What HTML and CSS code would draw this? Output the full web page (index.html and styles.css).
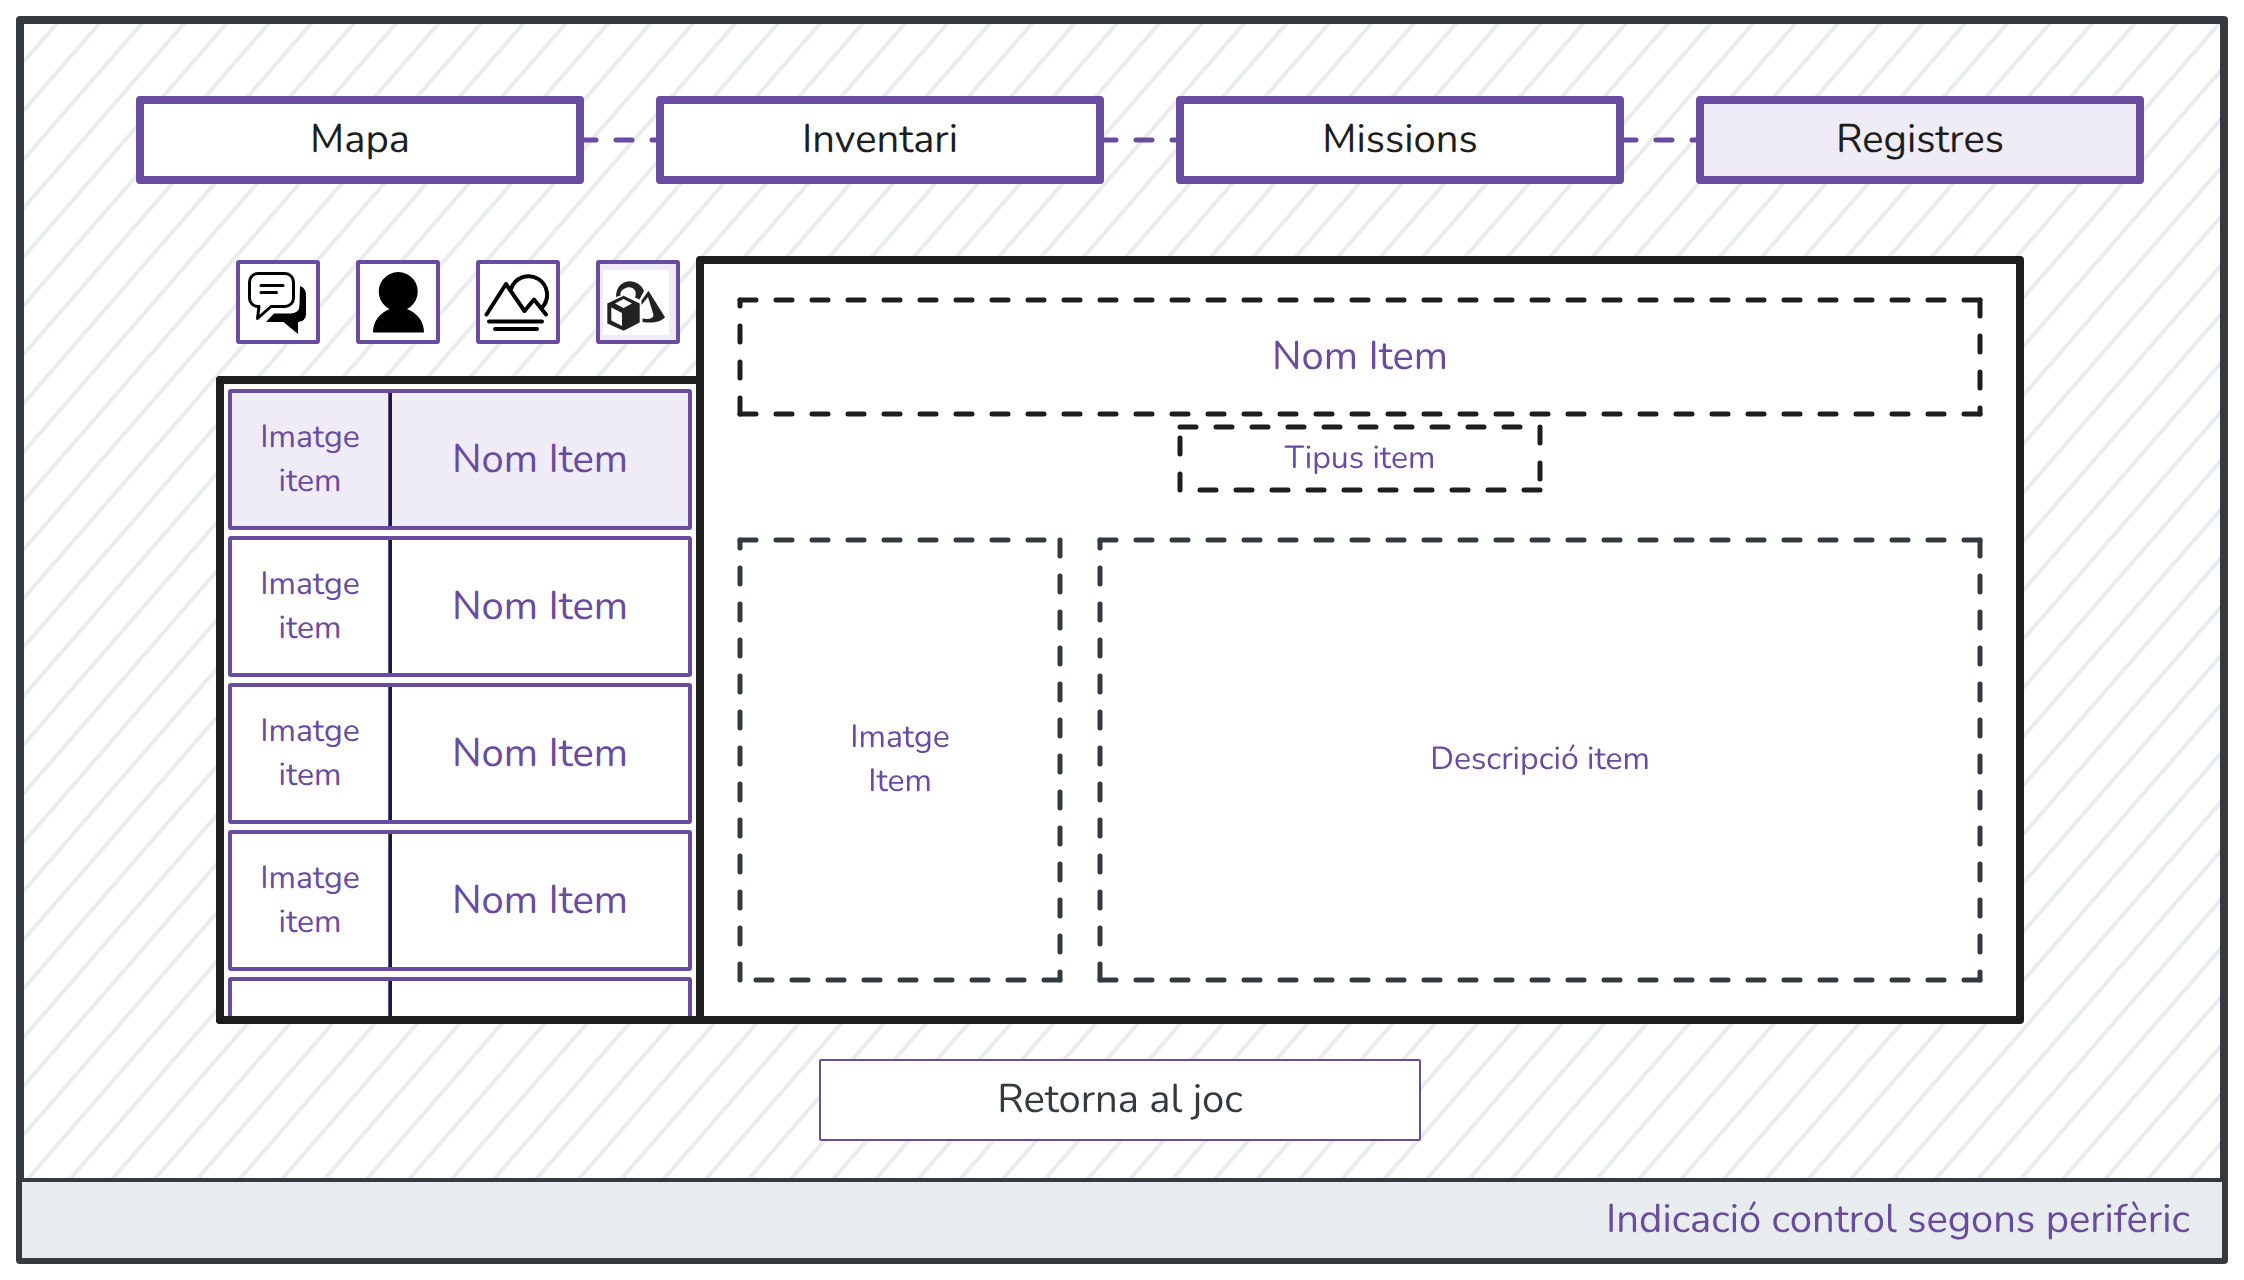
FILE: index.html
```html
<!DOCTYPE html>
<html lang="ca">
<head>
<meta charset="utf-8">
<meta name="viewport" content="width=device-width, initial-scale=1">
<title>Registres</title>
<link rel="stylesheet" href="styles.css">
</head>
<body>
<div class="frame">
  <nav class="menu" aria-label="Menú">
    <button class="menu-item" type="button">Mapa</button>
    <svg class="connector" aria-hidden="true"><line x1="-4" y1="4" x2="76" y2="4"/></svg>
    <button class="menu-item" type="button">Inventari</button>
    <svg class="connector" aria-hidden="true"><line x1="-4" y1="4" x2="76" y2="4"/></svg>
    <button class="menu-item" type="button">Missions</button>
    <svg class="connector" aria-hidden="true"><line x1="-4" y1="4" x2="76" y2="4"/></svg>
    <button class="menu-item selected" type="button" aria-current="page">Registres</button>
  </nav>

  <main class="workspace">
    <section class="browser">
      <div class="filters">
        <button class="filter" type="button" aria-label="Diàlegs">
          <svg viewBox="0 0 84 84" aria-hidden="true">
            <path d="M22 13.500H49a8.500 8.500 0 0 1 8.500 8.500V38a8.500 8.500 0 0 1-8.500 8.500H35L21.500 58.500L23 46.500H22a8.500 8.500 0 0 1-8.500-8.500V22a8.500 8.500 0 0 1 8.500-8.500Z" fill="none" stroke="#000" stroke-width="3" stroke-linejoin="round"/>
            <path d="M25 25.500H47M25 32.500H40.500" stroke="#000" stroke-width="3" stroke-linecap="round"/>
            <path d="M64 26Q70 28 70 35V54Q70 61 62 62V74L47.500 62H30L38 53.500H55Q63.500 53 63.500 45Z"/>
          </svg>
        </button>
        <button class="filter" type="button" aria-label="Personatges">
          <svg viewBox="0 0 84 84" aria-hidden="true">
            <path d="M33.500 49A19.500 19.500 0 1 1 51 49C61 53 68 61 68 72.500H17C17 61 24 53 33.500 49Z"/>
          </svg>
        </button>
        <button class="filter" type="button" aria-label="Llocs">
          <svg viewBox="0 0 84 84" fill="none" stroke="#000" stroke-width="4" stroke-linecap="round" stroke-linejoin="round" aria-hidden="true">
            <path d="M10.500 54.500L30 24L48.500 51L58 39.500L70 54.500"/>
            <path d="M35 29A18.500 18.500 0 1 1 66 47.500M13 61.500H66M19 69H61"/>
          </svg>
        </button>
        <button class="filter active" type="button" aria-label="Objectes" aria-pressed="true">
          <svg viewBox="0 0 84 84" aria-hidden="true">
            <path d="M7 10H73V75H7Z" fill="#fff"/>
            <path d="M20 37C20 17 43 17 48 31L43.500 39.500L39 37.500C42 30 36 26 31 27.500C26 29 24 32 24.500 35.500Z" fill="#222"/>
            <path d="M27.700 35.700L43.700 43.500V62.500L27.700 70.700L11.300 63.500V43.500Z" fill="#222"/>
            <path d="M27.500 39L36 43.500L27.500 48L19 43.500ZM15.300 47.500L26 53V66L15.300 60.500Z" fill="#fff"/>
            <path d="M52.500 30.700L69 57.300C65 62 57 63.500 46.500 62V58.500C53 59.500 57 59 57.500 55L52 37L45.500 45V40.500Z" fill="#222"/>
          </svg>
        </button>
      </div>

      <ul class="items">
        <li><button class="item selected" type="button"><span class="item-image">Imatge<br>item</span><span class="item-name">Nom Item</span></button></li>
        <li><button class="item" type="button"><span class="item-image">Imatge<br>item</span><span class="item-name">Nom Item</span></button></li>
        <li><button class="item" type="button"><span class="item-image">Imatge<br>item</span><span class="item-name">Nom Item</span></button></li>
        <li><button class="item" type="button"><span class="item-image">Imatge<br>item</span><span class="item-name">Nom Item</span></button></li>
        <li><button class="item" type="button" aria-label="Item"><span class="item-image"></span><span class="item-name"></span></button></li>
      </ul>
    </section>

    <article class="detail">
      <h1 class="slot slot-title">
        <svg class="dashes" aria-hidden="true"><line x2="100%"/><line x1="100%" x2="100%" y2="100%"/><line x1="100%" y1="100%" y2="100%"/><line y1="100%"/></svg>
        Nom Item
      </h1>
      <p class="slot slot-type">
        <svg class="dashes" aria-hidden="true"><line x2="100%"/><line x1="100%" x2="100%" y2="100%"/><line x1="100%" y1="100%" y2="100%"/><line y1="100%"/></svg>
        Tipus item
      </p>
      <div class="detail-body">
        <div class="slot slot-soft">
          <svg class="dashes" aria-hidden="true"><line x2="100%"/><line x1="100%" x2="100%" y2="100%"/><line x1="100%" y1="100%" y2="100%"/><line y1="100%"/></svg>
          <span>Imatge<br>Item</span>
        </div>
        <div class="slot slot-soft">
          <svg class="dashes" aria-hidden="true"><line x2="100%"/><line x1="100%" x2="100%" y2="100%"/><line x1="100%" y1="100%" y2="100%"/><line y1="100%"/></svg>
          <span>Descripció item</span>
        </div>
      </div>
    </article>
  </main>

  <button class="return" type="button">Retorna al joc</button>

  <footer class="hint">Indicació control segons perifèric</footer>
</div>
</body>
</html>
```
FILE: styles.css
```css
:root {
  --purple: #694b9f;
  --lavender: #f0ecf7;
  --ink: #1e1e1e;
  --slate: #343a40;
  --mist: #e9ecef;
}

* { box-sizing: border-box; }

body {
  margin: 0;
  padding: 16px;
  background: #fff;
  color: var(--ink);
  font: 32px/44px Nunito, Lato, sans-serif;
  text-rendering: geometricPrecision;
}

button {
  font: inherit;
  color: inherit;
  text-rendering: inherit;
  cursor: pointer;
}

.frame {
  display: flex;
  flex-direction: column;
  height: calc(100vh - 32px);
  min-height: 960px;
  border: 8px solid var(--slate);
  border-radius: 4px;
  background: repeating-linear-gradient(131deg,
    #fff 0 22px, var(--mist) 23px 26px, #fff 27px 32px);
}

/* Top menu */
.menu {
  display: flex;
  align-items: center;
  padding: 72px 76px 0 112px;
}

.menu-item {
  flex: 1;
  height: 88px;
  padding: 0;
  border: 8px solid var(--purple);
  border-radius: 4px;
  background: #fff;
  font-size: 40px;
}

.menu-item.selected { background: var(--lavender); }

.connector {
  width: 72px;
  height: 8px;
  overflow: visible;
}

.connector line {
  stroke: var(--purple);
  stroke-width: 5px;
  stroke-linecap: round;
  stroke-dasharray: 16 20;
}

/* Item browser and detail */
.workspace {
  flex: 1;
  display: grid;
  grid-template-columns: 480px 1fr;
  grid-template-rows: minmax(0, 1fr);
  min-height: 0;
  margin: 72px 196px 0 192px;
}

.browser {
  display: flex;
  flex-direction: column;
  min-height: 0;
}

.filters {
  display: flex;
  gap: 36px;
  padding: 4px 20px 32px;
}

.filter {
  width: 84px;
  height: 84px;
  padding: 0;
  border: 4px solid var(--purple);
  border-radius: 3px;
  background: #fff;
}

.filter svg {
  display: block;
  width: 84px;
  height: 84px;
  margin: -4px;
}

.filter.active { background: var(--lavender); }

.items {
  flex: 1;
  display: flex;
  flex-direction: column;
  gap: 6px;
  min-height: 0;
  margin: 0;
  padding: 5px 4px 0;
  overflow-y: auto;
  scrollbar-width: none;
  list-style: none;
  border: 8px solid var(--ink);
  border-right: 0;
  border-radius: 4px 0 0 4px;
  background: #fff;
}

.item {
  display: grid;
  grid-template-columns: 157px 1fr;
  width: 100%;
  height: 141px;
  padding: 0;
  border: 4px solid var(--purple);
  border-radius: 3px;
  background: #fff;
  color: var(--purple);
}

.items li { display: flex; }

.item.selected { background: var(--lavender); }

.item-image,
.item-name {
  display: flex;
  align-items: center;
  justify-content: center;
  height: 100%;
}

.item-image { border-right: 1px solid var(--purple); }

.item-name {
  border-left: 3px solid var(--ink);
  font-size: 40px;
}

.detail {
  display: flex;
  flex-direction: column;
  align-items: center;
  padding: 36px;
  border: 8px solid var(--ink);
  border-radius: 4px 4px 4px 0;
  background: #fff;
  color: var(--purple);
}

.slot {
  position: relative;
  display: flex;
  align-items: center;
  justify-content: center;
  margin: 0;
  text-align: center;
}

.dashes {
  position: absolute;
  inset: 0;
  width: 100%;
  height: 100%;
  overflow: visible;
  stroke: var(--ink);
  stroke-width: 5px;
  stroke-linecap: round;
  stroke-dasharray: 16 20;
}

.slot-soft .dashes { stroke: var(--slate); }

.slot-title {
  width: 100%;
  height: 114px;
  font-size: 40px;
  font-weight: 400;
}

.slot-type {
  width: 360px;
  height: 63px;
  margin: 13px 0 50px;
}

.detail-body {
  flex: 1;
  display: grid;
  grid-template-columns: 320px 1fr;
  gap: 40px;
  width: 100%;
}

/* Return button and control hint */
.return {
  align-self: center;
  width: 602px;
  height: 82px;
  margin: 35px 4px 37px 0;
  padding: 0;
  border: 2px solid var(--purple);
  border-radius: 2px;
  background: #fff;
  color: var(--slate);
  font-size: 40px;
}

.hint {
  display: flex;
  align-items: center;
  justify-content: flex-end;
  height: 84px;
  margin: 0 -6px -6px;
  padding: 0 32px;
  border: 4px solid var(--slate);
  background: var(--mist);
  color: var(--purple);
  font-size: 40px;
}
```
